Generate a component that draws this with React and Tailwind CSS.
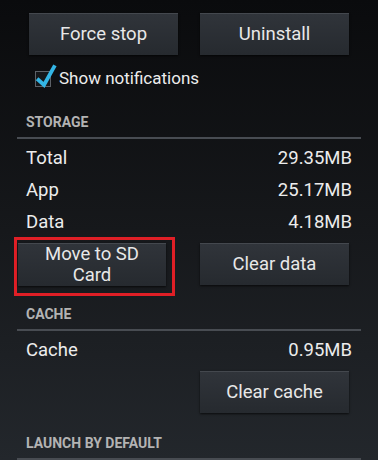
function Btn({ children, className = "" }) {
  return (
    <button
      className={`flex items-center justify-center text-center bg-gradient-to-b from-[#30343a] to-[#262a2f] border-t border-[#44484e] shadow-[0_1px_2px_rgba(0,0,0,0.7)] text-[#e8e8e8] text-[18.5px] leading-[21px] ${className}`}
    >
      {children}
    </button>
  );
}

function Header({ children, className = "" }) {
  return (
    <div className={`pl-[26px] text-[14px] leading-[16px] font-bold text-[#b3b3b3] ${className}`}>
      {children}
    </div>
  );
}

function Divider() {
  return <div className="mx-[17px] h-[2px] bg-[#484c52]" />;
}

function Row({ label, value }) {
  return (
    <div className="flex h-[32px] items-center justify-between pl-[26px] pr-[26px] text-[18.5px] text-[#ececec]">
      <span>{label}</span>
      <span>{value}</span>
    </div>
  );
}

export default function App() {
  return (
    <div
      className="w-[378px] h-[460px] overflow-hidden bg-gradient-to-b from-[#0a0b0d] via-[#16181b] to-[#23272c]"
      style={{ fontFamily: "Roboto, 'Noto Sans', sans-serif" }}
    >
      <div className="flex gap-[22px] pl-[29px] pt-[13px]">
        <Btn className="w-[149px] h-[42px]">Force stop</Btn>
        <Btn className="w-[149px] h-[42px]">Uninstall</Btn>
      </div>

      <div className="flex h-[48px] items-center pl-[35px]">
        <div className="relative h-[16px] w-[16px] border border-[#5c6168] bg-[#15171a]">
          <svg className="absolute -top-[8px] -left-[1px]" width="22" height="24" viewBox="0 0 22 24">
            <path d="M3.5 16 L9 21 L19 3" fill="none" stroke="#33b5e5" strokeWidth="3.8" strokeLinecap="square" />
          </svg>
        </div>
        <span className="ml-[8px] text-[17px] text-[#ececec]">Show notifications</span>
      </div>

      <Header className="h-[34px] pt-[11px]">STORAGE</Header>
      <Divider />
      <div className="mt-[4px]">
        <Row label="Total" value="29.35MB" />
        <Row label="App" value="25.17MB" />
        <Row label="Data" value="4.18MB" />
      </div>

      <div className="-mt-[2px] flex items-start">
        <div className="ml-[14px] h-[59px] w-[161px] border-[3px] border-[#e01f26] pl-[1px] pt-[3px]">
          <Btn className="w-[148px] h-[43px]">Move to SD<br />Card</Btn>
        </div>
        <Btn className="ml-[25px] mt-[6px] w-[149px] h-[42px]">Clear data</Btn>
      </div>

      <Header className="h-[33px] pt-[10px]">CACHE</Header>
      <Divider />
      <div className="mt-[4px]">
        <Row label="Cache" value="0.95MB" />
      </div>
      <div className="mt-[4px] pl-[200px]">
        <Btn className="w-[149px] h-[42px]">Clear cache</Btn>
      </div>

      <Header className="h-[45px] pt-[22px]">LAUNCH BY DEFAULT</Header>
      <Divider />
    </div>
  );
}
